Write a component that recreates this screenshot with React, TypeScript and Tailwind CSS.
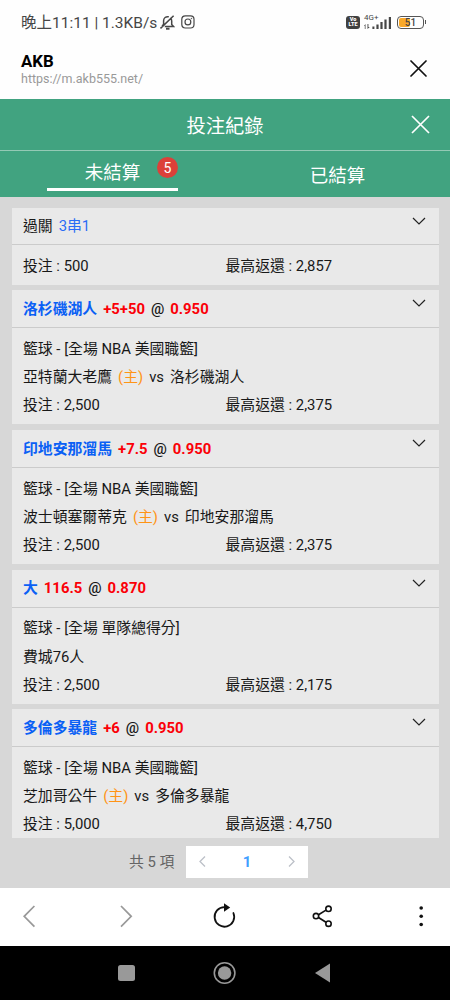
import React from "react";

type Bet = {
  title: string;
  line: string;
  odds: string;
  league: string;
  home: string;
  away?: string;
  stake: string;
  payout: string;
};

const bets: Bet[] = [
  { title: "洛杉磯湖人", line: "+5+50", odds: "0.950", league: "籃球 - [全場 NBA 美國職籃]", home: "亞特蘭大老鷹", away: "洛杉磯湖人", stake: "2,500", payout: "2,375" },
  { title: "印地安那溜馬", line: "+7.5", odds: "0.950", league: "籃球 - [全場 NBA 美國職籃]", home: "波士頓塞爾蒂克", away: "印地安那溜馬", stake: "2,500", payout: "2,375" },
  { title: "大", line: "116.5", odds: "0.870", league: "籃球 - [全場 單隊總得分]", home: "費城76人", stake: "2,500", payout: "2,175" },
  { title: "多倫多暴龍", line: "+6", odds: "0.950", league: "籃球 - [全場 NBA 美國職籃]", home: "芝加哥公牛", away: "多倫多暴龍", stake: "5,000", payout: "4,750" },
];

function Chevron() {
  return (
    <svg className="mt-[9px] mr-[13px] h-[8px] w-[14px]" viewBox="0 0 14 8" fill="none" stroke="#222" strokeWidth="1.2">
      <path d="M1 1l6 6 6-6" />
    </svg>
  );
}

function Amounts({ stake, payout }: { stake: string; payout: string }) {
  return (
    <div className="grid h-[28.2px] grid-cols-[202.5px_1fr] items-center">
      <span>投注 : {stake}</span>
      <span>最高返還 : {payout}</span>
    </div>
  );
}

function BetCard({ bet, last }: { bet: Bet; last: boolean }) {
  return (
    <section className={last ? "h-[128.5px] overflow-hidden bg-[#e9e9e9]" : "h-[134.25px] bg-[#e9e9e9]"}>
      <header className="flex h-[38px] justify-between border-b border-[#cbcbcb] pl-[11px]">
        <div className="flex items-center gap-[6px] pt-[1.5px] font-bold">
          <span className="text-[#0a60f5]">{bet.title}</span>
          <span className="text-[#fb0007]">{bet.line}</span>
          <span className="font-medium">@</span>
          <span className="text-[#fb0007]">{bet.odds}</span>
        </div>
        <Chevron />
      </header>
      <div className="pt-[7.2px] pl-[11px]">
        <div className="flex h-[28.2px] items-center">{bet.league}</div>
        <div className="flex h-[28.2px] items-center gap-[6px]">
          <span>{bet.home}</span>
          {bet.away && (
            <>
              <span className="text-[#ff9416]">(主)</span>
              <span>vs</span>
              <span>{bet.away}</span>
            </>
          )}
        </div>
        <Amounts stake={bet.stake} payout={bet.payout} />
      </div>
    </section>
  );
}

function StatusBar() {
  return (
    <div className="flex h-[44px] items-center pl-[21px] text-[#464646]">
      <span className="w-[136px] pt-[3px] text-[15.5px] whitespace-nowrap">晚上11:11 | 1.3KB/s</span>
      <svg className="ml-[3px] h-[15px] w-[15px]" viewBox="0 0 15 15" fill="none" stroke="currentColor" strokeWidth="1.5">
        <path d="M4.8 11.5h8.7l-1.8-2V6c0-1.3-.4-2.4-1.4-3.1M8.8 1.8C5.8 1.2 3.6 3 3.6 5.7v3.5l-1.5 2M.5 13.4L13.6.7" />
        <path d="M6 13.7h3.5" strokeWidth="2" />
      </svg>
      <svg className="ml-[6px] h-[14px] w-[14px]" viewBox="0 0 14 14" fill="none" stroke="currentColor" strokeWidth="1.2">
        <rect x=".8" y=".8" width="12.2" height="12.2" rx="3.5" />
        <circle cx="6.9" cy="6.9" r="2.9" />
        <circle cx="10.4" cy="3.5" r=".5" fill="currentColor" strokeWidth=".3" />
      </svg>
      <div className="ml-[151px] flex h-[13px] w-[14px] flex-col items-center justify-center rounded-[3px] bg-[#414141] text-[5.5px] leading-[5px] font-black text-white">
        <span>Vo</span>
        <span>LTE</span>
      </div>
      <div className="relative ml-[4px] h-[15px] w-[28px]">
        <span className="absolute -top-[1px] left-0 text-[8px] leading-[8px]">4G+</span>
        <svg className="h-[15px] w-[28px]" viewBox="0 0 28 15" fill="currentColor">
          <path d="M0 11l1.5-2v5H.8v-3zM3.5 9h.9v3h1.4L3.5 14zM8.4 11.5h2V14h-2zM12.4 9.5h2.2V14h-2.2zM16.4 7h2.2v7h-2.2zM20.4 4.5h2.2V14h-2.2zM24.800 2H27v12h-2.2z" />
        </svg>
      </div>
      <div className="ml-[5px] flex items-center">
        <div className="relative flex h-[13px] w-[27px] items-center justify-center rounded-[4px] border-[1.5px] border-[#555]">
          <i className="absolute top-[1px] left-[1px] h-[9px] w-[11px] rounded-[2px] bg-[#faa928]" />
          <span className="relative pt-[1px] text-[10px] leading-none font-medium">51</span>
        </div>
        <i className="ml-[1px] h-[4px] w-[1px] bg-[#555]" />
      </div>
    </div>
  );
}

function BrowserBar() {
  return (
    <nav className="flex h-[58px] items-center bg-white">
      <svg className="h-[58px] w-full" viewBox="0 888 450 58" fill="none" stroke="#111">
        <g stroke="#999" strokeWidth="1.7">
          <path d="M34.4 906l-10.2 10.3 10.2 10.3M121 906l10.2 10.3L121 926.6" />
        </g>
        <path d="M224.4 907.1a9.8 9.8 0 1 0 9 5.9" strokeWidth="1.8" strokeLinecap="round" />
        <path d="M224 903.3l6.2 4.2-6.2 4.2z" fill="#111" stroke="none" />
        <path d="M318.5 914.7l7.5-4.6M318.5 917.5l7.5 4.7" strokeWidth="1.7" />
        <g strokeWidth="1.6">
          <circle cx="316" cy="916.1" r="2.7" />
          <circle cx="328.5" cy="908.8" r="2.7" />
          <circle cx="328.5" cy="923.7" r="2.7" />
        </g>
        <g fill="#111" stroke="none">
          <circle cx="421.2" cy="908" r="1.8" />
          <circle cx="421.2" cy="916.3" r="1.8" />
          <circle cx="421.2" cy="924.5" r="1.8" />
        </g>
      </svg>
    </nav>
  );
}

export default function App() {
  return (
    <div className="flex h-[1000px] w-[450px] flex-col overflow-hidden bg-[#d7d7d7] font-['Roboto','Noto_Sans_CJK_TC',sans-serif] text-[14.85px] leading-none text-[#181818]">
      <div className="h-[99px] bg-[#fefefe]">
        <StatusBar />
        <div className="flex justify-between pr-[23px] pl-[21px]">
          <div className="pt-[9px]">
            <h1 className="text-[16.8px] leading-[17px] font-bold text-black">AKB</h1>
            <p className="mt-[2px] text-[12.5px] leading-[14px] text-[#999]">https://m.akb555.net/</p>
          </div>
          <svg className="mt-[16px] h-[17px] w-[17px]" viewBox="0 0 17 17" stroke="#111" strokeWidth="1.7" strokeLinecap="round">
            <path d="M1 1l15 15M16 1L1 16" />
          </svg>
        </div>
      </div>

      <header className="grid h-[52px] grid-cols-[1fr_auto_1fr] items-center border-b border-[#94c9b5] bg-[#41a380] text-white">
        <h2 className="col-start-2 pt-[5px] text-[19.3px]">投注紀錄</h2>
        <svg className="mr-[20px] h-[19px] w-[19px] justify-self-end" viewBox="0 0 19 19" stroke="currentColor" strokeWidth="1.7">
          <path d="M1 1l17 17M18 1L1 18" />
        </svg>
      </header>
      <div className="grid h-[46px] grid-cols-2 bg-[#41a380] text-[18.5px] text-white">
        <div className="relative mr-[47px] ml-[47px] flex h-[39.5px] items-center justify-center border-b-[3px] border-white pt-[7px]">
          未結算
          <span className="absolute top-[6px] right-0 flex h-[21px] w-[21px] items-center justify-center rounded-full bg-[#dc4039] text-[14px]">5</span>
        </div>
        <div className="flex items-center justify-center pt-[4px]">已結算</div>
      </div>

      <main className="h-[691px] pt-[11px] pr-[11px] pl-[12px]">
        <div className="flex flex-col gap-[5.5px]">
          <section className="h-[76.5px] bg-[#e9e9e9]">
            <header className="flex h-[37px] justify-between border-b border-[#cbcbcb] pl-[11px]">
              <div className="flex items-center gap-[6px] pt-[1.5px]">
                <span>過關</span>
                <span className="text-[#2a6cf5]">3串1</span>
              </div>
              <Chevron />
            </header>
            <div className="pt-[7px] pl-[11px]">
              <Amounts stake="500" payout="2,857" />
            </div>
          </section>
          {bets.map((bet, i) => (
            <BetCard key={bet.title} bet={bet} last={i === bets.length - 1} />
          ))}
        </div>
        <footer className="mt-[8px] flex h-[32px] items-center pl-[117px] text-[#646464]">
          <span className="w-[57px] pt-[1px] whitespace-nowrap">共 5 項</span>
          <div className="flex h-[32px] w-[122px] items-center justify-between bg-white px-[13px]">
            <svg className="h-[11px] w-[7px]" viewBox="0 0 7 11" fill="none" stroke="#bcc0c8" strokeWidth="1.3">
              <path d="M6 .5l-5 5 5 5" />
            </svg>
            <span className="pt-[1px] font-bold text-[#409eff]">1</span>
            <svg className="h-[11px] w-[7px]" viewBox="0 0 7 11" fill="none" stroke="#bcc0c8" strokeWidth="1.3">
              <path d="M1 .5l5 5-5 5" />
            </svg>
          </div>
        </footer>
      </main>

      <BrowserBar />
      <div className="h-[54px] bg-black">
        <svg className="h-[54px] w-full" viewBox="0 946 450 54" fill="#999">
          <rect x="118" y="965" width="17" height="16" rx="2.5" />
          <circle cx="224.6" cy="973" r="10.3" fill="none" stroke="#999" strokeWidth="1.6" />
          <circle cx="224.6" cy="973" r="6.7" />
          <path d="M315 973l15-9.5v19z" />
        </svg>
      </div>
    </div>
  );
}
